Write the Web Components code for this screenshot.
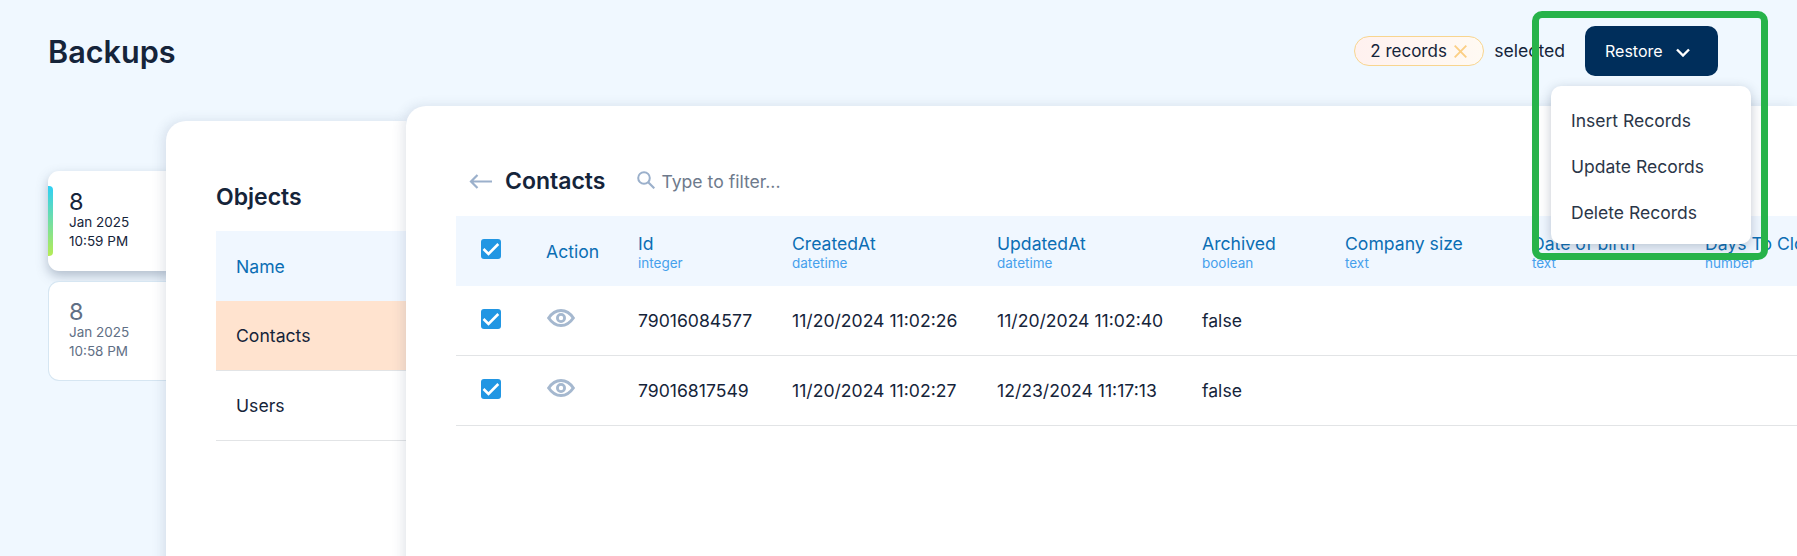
<!DOCTYPE html>
<html>
<head>
<meta charset="utf-8">
<title>Backups</title>
<style>
  html, body { margin: 0; height: 100%; overflow: hidden; background: #f0f8ff; }
  body { font-family: Inter, "Liberation Sans", sans-serif; color: #15243a; }
</style>
</head>
<body>
<backup-page></backup-page>

<script>
// small helper so every component is written the same way
function makeTemplate(html) {
  var t = document.createElement("template");
  t.innerHTML = html;
  return t;
}

function defineSimple(tag, template) {
  customElements.define(tag, class extends HTMLElement {
    constructor() {
      super();
      this.attachShadow({ mode: "open" });
      this.shadowRoot.appendChild(template.content.cloneNode(true));
    }
  });
}

// header chip
defineSimple("record-chip", makeTemplate(`
<style>
  :host { display: inline-flex; align-items: center; box-sizing: border-box; width: 130px; height: 30px; padding: 0 0 0 15px; gap: 7px;
    border: 1px solid #f8d58f; border-radius: 15px; background: linear-gradient(90deg, #fff1ef, #fffaf3); font-size: 17px; color: #15243a; white-space: nowrap; }
  svg { display: block; flex: none; }
</style>
<slot></slot>
<svg width="13" height="13" viewBox="0 0 13 13"><path d="M.7.7l11.600 11.600M12.300.7L.7 12.300" stroke="#fbcf85" stroke-width="1.900" fill="none"/></svg>
`));

// restore button
defineSimple("restore-button", makeTemplate(`
<style>
  :host { display: flex; align-items: center; box-sizing: border-box; width: 133px; height: 50px; padding-left: 20px; gap: 13px;
    background: #002e5b; color: #fff; border-radius: 10px; font-size: 16px; }
  svg { display: block; margin-top: 3px; }
</style>
<slot></slot>
<svg width="14" height="9" viewBox="0 0 14 9"><path d="M1 1.500l6 6 6-6" stroke="#fff" stroke-width="2.400" fill="none"/></svg>
`));

// dropdown + green highlight, both float above the table
defineSimple("restore-menu", makeTemplate(`
<style>
  :host { position: absolute; left: 1551px; top: 86px; width: 200px; height: 158px; box-sizing: border-box; padding: 11px 20px;
    background: #fff; border-radius: 10px; box-shadow: 0 3px 12px rgba(40, 60, 90, .28); font-size: 17.500px; color: #2b3648; z-index: 5; display: flex; flex-direction: column; }
  ::slotted(div) { height: 46px; flex: none; display: flex; align-items: center; }
</style>
<slot></slot>
`));

defineSimple("green-box", makeTemplate(`
<style>
  :host { position: absolute; left: 1532px; top: 11px; width: 236px; height: 249px; box-sizing: border-box;
    border: 7px solid #27b34a; border-radius: 10px; z-index: 6; pointer-events: none; }
</style>
`));

// date cards on the left
customElements.define("date-card", class extends HTMLElement {
  constructor() {
    super();
    this.attachShadow({ mode: "open" });
    this.shadowRoot.innerHTML = `
<style>
  :host { display: block; position: relative; box-sizing: border-box; width: 125px; height: 100px; padding: 20px 0 0 21px;
    background: #fff; border-radius: 11px 0 0 11px; color: #15243a; font-size: 13.500px; line-height: 19px; }
  :host([active]) { box-shadow: 0 5px 12px rgba(60, 80, 110, .35); }
  :host(:not([active])) { border: 1px solid #d6e6f2; border-right: 0; color: #5f6f85; padding: 19px 0 0 20px; }
  .day { font-size: 23.500px; line-height: 22px; }
  .bar { display: none; position: absolute; left: 0; top: 15px; width: 5px; height: 70px; border-radius: 0 4px 4px 0;
    background: linear-gradient(#2fd0f5, #b5ec55); }
  :host([active]) .bar { display: block; }
</style>
<div class="bar"></div>
<div class="day">${this.getAttribute("day")}</div>
<div>${this.getAttribute("month")}</div>
<div>${this.getAttribute("time")}</div>`;
  }
});

// one row of the objects list
customElements.define("object-row", class extends HTMLElement {
  constructor() {
    super();
    this.attachShadow({ mode: "open" });
    this.shadowRoot.innerHTML = `
<style>
  :host { display: flex; align-items: center; box-sizing: border-box; height: 70px; padding-left: 20px; font-size: 17.600px; color: #15243a;
    border-bottom: 1px solid #e2e4e6; }
  :host([head]) { background: #f0f7ff; color: #0b6eb4; border-bottom: 0; }
  :host([selected]) { background: #ffe3cf; }
</style>
<slot></slot>`;
  }
});

var CHECK = `<svg class="check" width="20" height="20" viewBox="0 0 20 20"><rect width="20" height="20" rx="3" fill="#2196e3"/><path d="M2.500 10l5 5 9.800-10" stroke="#fff" stroke-width="2.600" fill="none"/></svg>`;
var EYE = `<svg width="28" height="18" viewBox="0 0 28 18"><path d="M1.700 9C5 4 9 1.500 14 1.500S23 4 26.300 9C23 14 19 16.500 14 16.500S5 14 1.700 9z" fill="none" stroke="#a5b8cf" stroke-width="3"/><circle cx="14" cy="9" r="3.600" fill="none" stroke="#a5b8cf" stroke-width="2.800"/></svg>`;
var COLS = "90px 92px 154px 205px 205px 143px 187px 173px 200px";

// table head cell: name + type
customElements.define("column-head", class extends HTMLElement {
  constructor() {
    super();
    this.attachShadow({ mode: "open" });
    this.shadowRoot.innerHTML = `
<style>
  :host { display: block; white-space: nowrap; padding-top: 1px; }
  .name { font-size: 17.600px; line-height: 22px; color: #0b6eb4; }
  .type { font-size: 13.500px; line-height: 16px; color: #46a0ec; }
</style>
<div class="name">${this.getAttribute("name")}</div>
<div class="type">${this.getAttribute("type") || ""}</div>`;
  }
});

// the records table
customElements.define("records-table", class extends HTMLElement {
  constructor() {
    super();
    this.attachShadow({ mode: "open" });
    var heads = [["Id","integer"],["CreatedAt","datetime"],["UpdatedAt","datetime"],["Archived","boolean"],["Company size","text"],["Date of birth","text"],["Days To Close","number"]];
    var rows = [
      ["79016084577","11/20/2024 11:02:26","11/20/2024 11:02:40","false"],
      ["79016817549","11/20/2024 11:02:27","12/23/2024 11:17:13","false"]
    ];
    var headHtml = heads.map(function (h) { return `<column-head name="${h[0]}" type="${h[1]}"></column-head>`; }).join("");
    var rowHtml = rows.map(function (r) {
      return `<div class="row"><div class="box">${CHECK}</div><div class="eye">${EYE}</div>` +
        r.map(function (c) { return `<div class="cell">${c}</div>`; }).join("") + `</div>`;
    }).join("");
    this.shadowRoot.innerHTML = `
<style>
  :host { display: block; width: 1500px; }
  .row, .head { display: grid; grid-template-columns: ${COLS}; align-items: center; box-sizing: border-box; height: 70px; }
  .head { background: #f0f7ff; }
  .row { border-bottom: 1px solid #e2e4e6; }
  .box { padding-left: 25px; height: 20px; margin-top: -4px; }
  .check { display: block; }
  .cell { font-size: 17.600px; white-space: nowrap; color: #15243a; }
  .act { font-size: 17.600px; color: #0b6eb4; }
  .eye { height: 18px; margin: -6px 0 0 1px; }
</style>
<div class="head"><div class="box">${CHECK}</div><div class="act">Action</div>${headHtml}</div>
${rowHtml}`;
  }
});

// white rounded sheet
defineSimple("panel-sheet", makeTemplate(`
<style>
  :host { display: block; position: relative; box-sizing: border-box; background: #fff; border-radius: 20px 0 0 0; box-shadow: -3px 0 12px rgba(60, 80, 110, .14); }
</style>
<slot></slot>
`));

// whole page
defineSimple("backup-page", makeTemplate(`
<style>
  :host { display: block; position: relative; height: 556px; overflow: hidden; }
  .top { display: flex; height: 106px; padding: 26px 79px 0 48px; box-sizing: border-box; align-items: flex-start; }
  h1 { margin: 1px 0 0; font-size: 30.600px; line-height: 50px; font-weight: 600; color: #15243a; flex: 1; }
  .sel { font-size: 17.600px; margin: 0 20px 0 10px; line-height: 50px; }
  record-chip { margin-top: 10px; }
  .main { display: flex; align-items: flex-start; }
  .dates { width: 118px; padding: 65px 0 0 48px; display: flex; flex-direction: column; gap: 10px; flex: none; }
  .objects { flex: none; width: 240px; margin-top: 15px; height: 500px; padding: 0 0 0 50px; }
  .objects h2 { margin: 0; font-size: 23px; font-weight: 600; line-height: 30px; padding-top: 61px; height: 110px; box-sizing: border-box; color: #15243a; }
  .detail { flex: 1; height: 500px; min-width: 0; padding-left: 50px; z-index: 2; }
  .bar { display: flex; align-items: center; height: 110px; box-sizing: border-box; padding-top: 40px; }
  .back { margin-left: 13px; display: block; }
  .bar h2 { margin: 0 0 0 13px; font-size: 23px; font-weight: 600; color: #15243a; }
  .search { margin: -3px 0 0 32px; display: block; }
  .filter { font-size: 17.600px; color: #6e7a8c; margin-left: 6px; }
</style>
<div class="top">
  <h1>Backups</h1>
  <record-chip>2 records</record-chip>
  <span class="sel">selected</span>
  <restore-button>Restore</restore-button>
</div>
<div class="main">
  <div class="dates">
    <date-card active day="8" month="Jan 2025" time="10:59 PM"></date-card>
    <date-card day="8" month="Jan 2025" time="10:58 PM"></date-card>
  </div>
  <panel-sheet class="objects">
    <h2>Objects</h2>
    <object-row head>Name</object-row>
    <object-row selected>Contacts</object-row>
    <object-row>Users</object-row>
  </panel-sheet>
  <panel-sheet class="detail">
    <div class="bar">
      <svg class="back" width="23" height="15" viewBox="0 0 23 15"><path d="M23 7.500H2M8.500 1L2 7.500 8.500 14" fill="none" stroke="#9bb0cb" stroke-width="2.200"/></svg>
      <h2>Contacts</h2>
      <svg class="search" width="18" height="18" viewBox="0 0 18 18"><circle cx="7" cy="7" r="5.800" fill="none" stroke="#9bb0cb" stroke-width="2"/><path d="M11.200 11.200L17.300 17.300" stroke="#9bb0cb" stroke-width="2.200"/></svg>
      <span class="filter">Type to filter...</span>
    </div>
    <records-table></records-table>
  </panel-sheet>
</div>
<green-box></green-box>
<restore-menu><div>Insert Records</div><div>Update Records</div><div>Delete Records</div></restore-menu>
`));
</script>
</body>
</html>
